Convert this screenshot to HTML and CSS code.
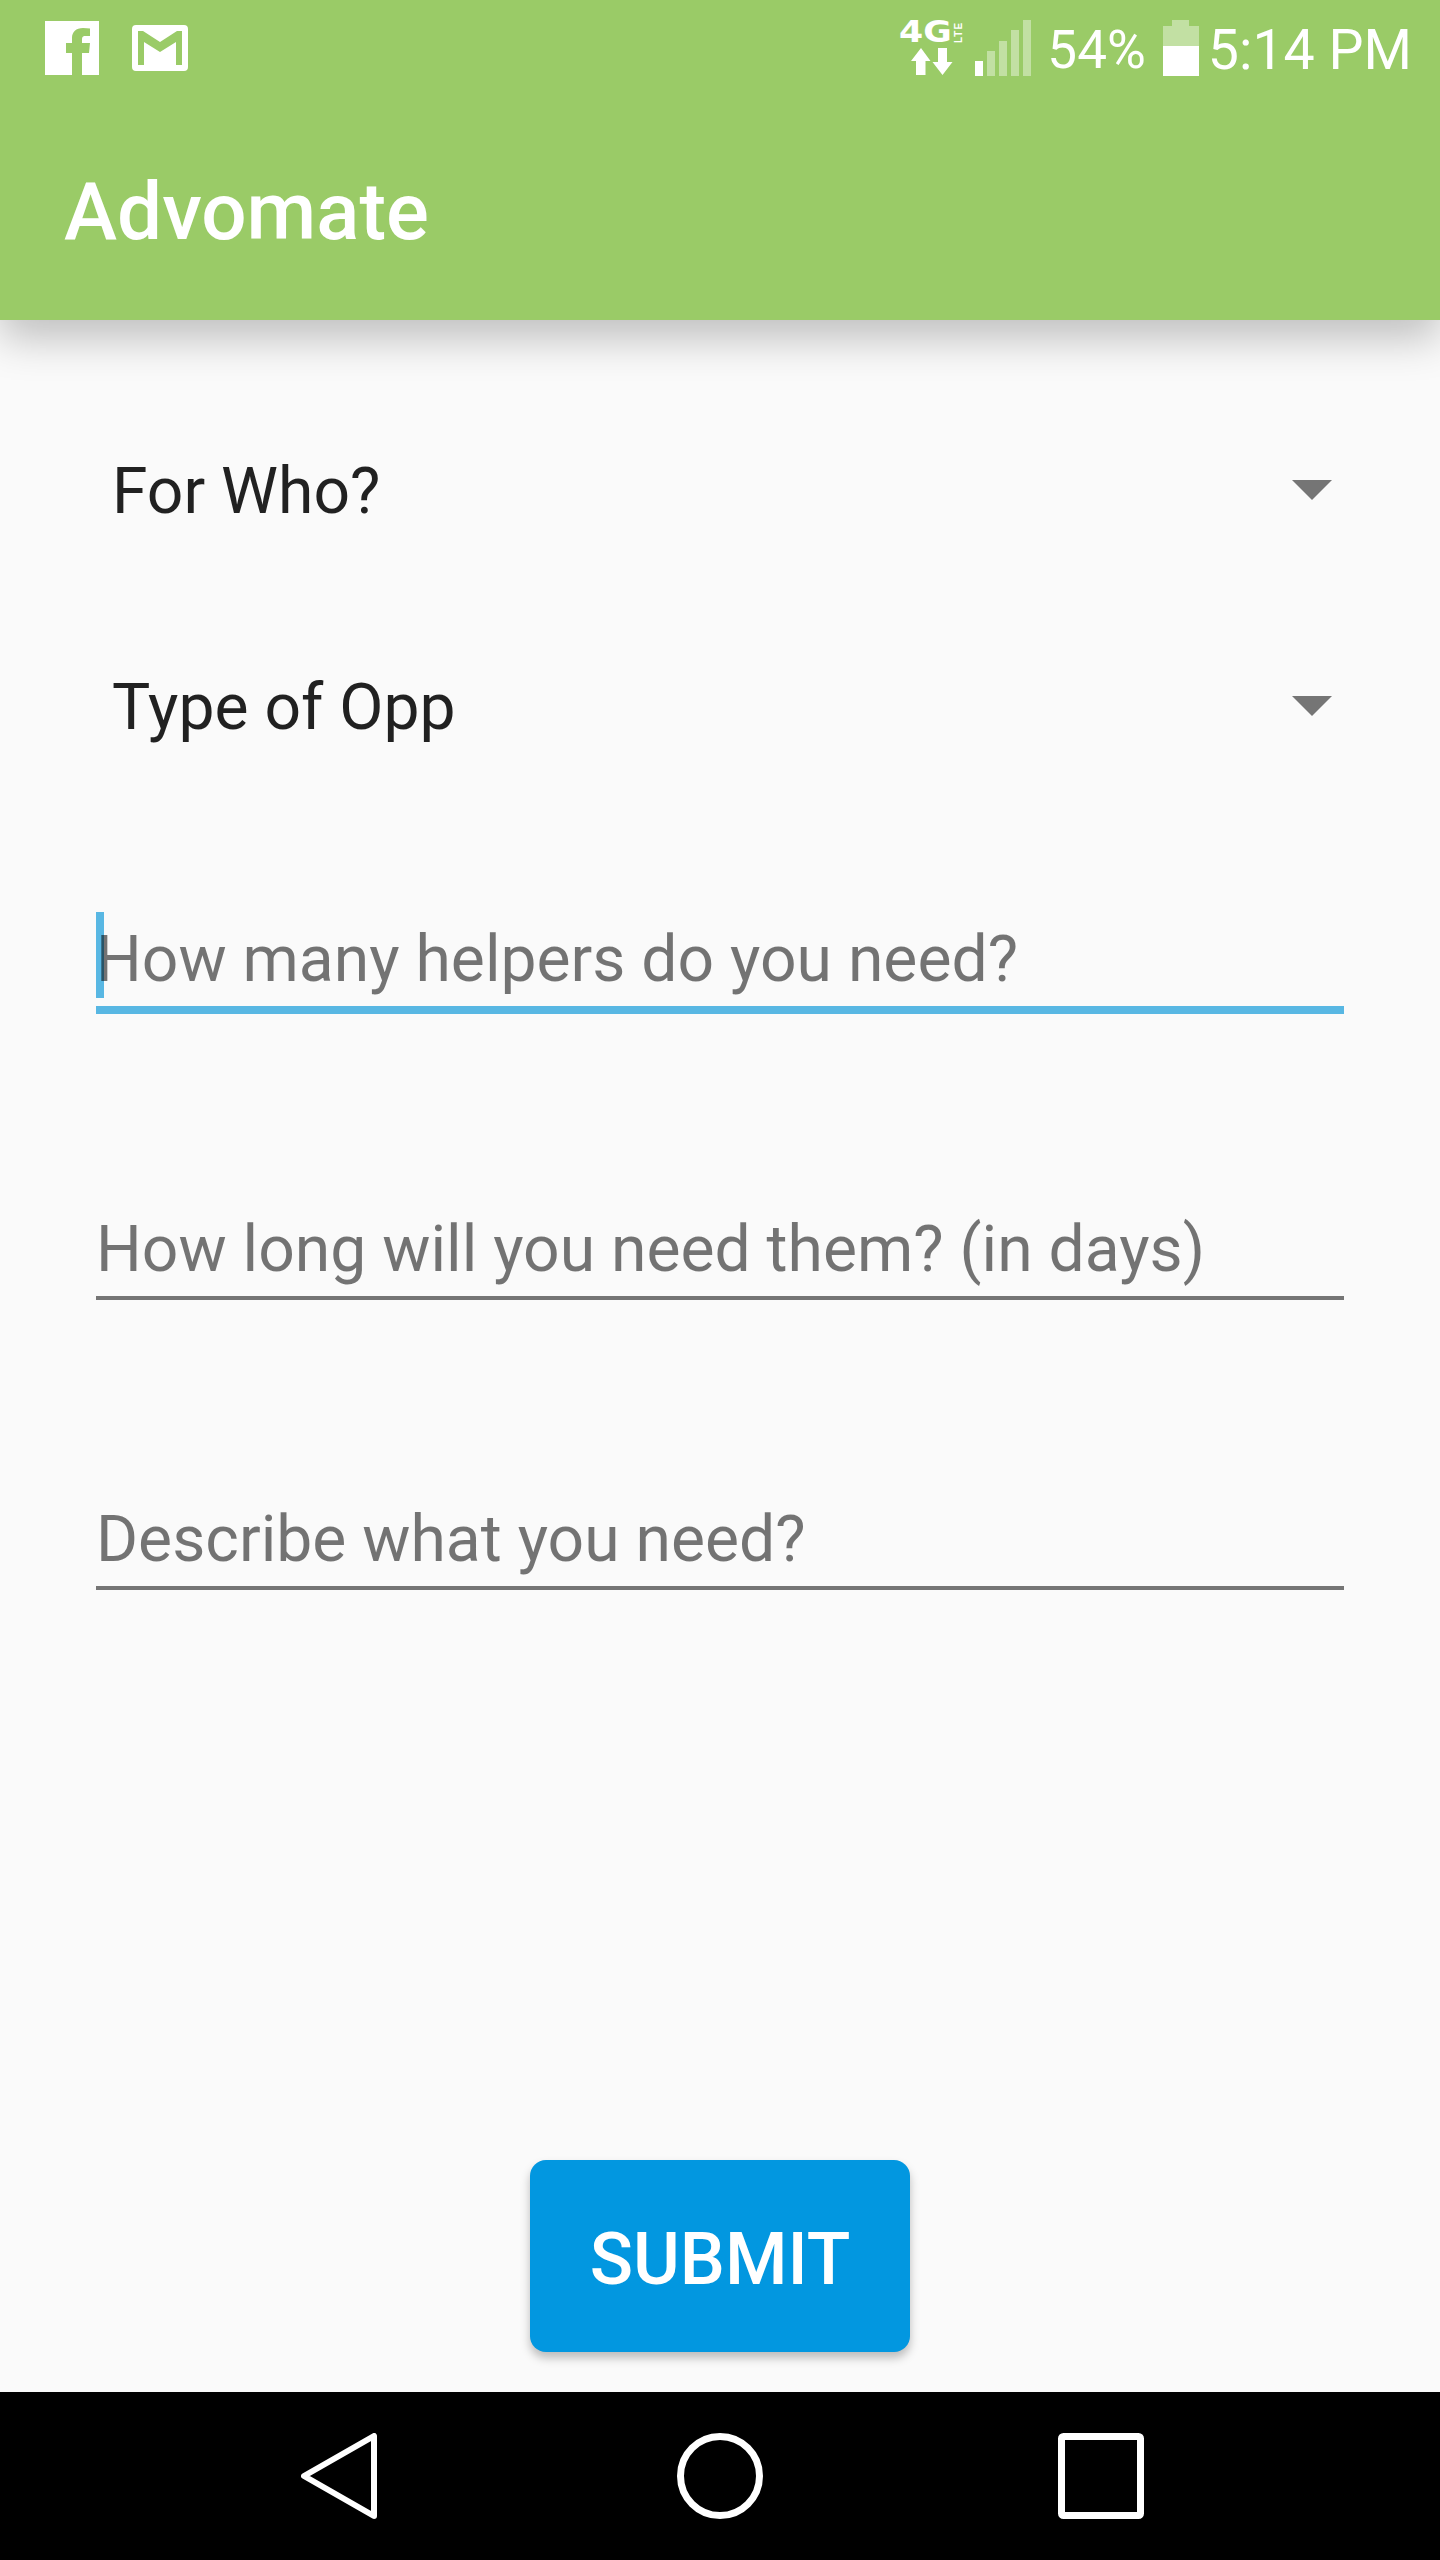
FILE: index.html
```html
<html>
<head>
  <title>Advomate</title>
  <link rel="stylesheet" href="styles.css">
</head>
<body>
  <header class="appbar">
    <div class="statusbar">
      <svg class="icon-fb" viewBox="0 0 54 54">
        <path fill="#fff" d="M0 0H54V54H37V32H44L45 22H37V18C37 15.500 38.500 15 41 15H45V7.500C43 7.200 40.500 7 38 7C31 7 27 11 27 17V22H21V32H27V54H0Z"/>
      </svg>
      <svg class="icon-mail" viewBox="0 0 56 46">
        <path fill="#fff" fill-rule="evenodd" d="M4 0H52Q56 0 56 4V42Q56 46 52 46H4Q0 46 0 42V4Q0 0 4 0ZM6 6V40H12V17L28 27L44 17V40H50V6H45L28 17L11 6Z"/>
      </svg>
      <div class="status-right">
        <div class="network">
          <div class="network-top"><span class="net-4g">4G</span><span class="net-lte">LTE</span></div>
          <svg class="net-arrows" viewBox="0 0 42 27">
            <path fill="#fff" d="M10 0L19.500 13H14.500V27H5V13H0ZM27 0H36V14H41.500L31.500 27L21.500 14H27Z"/>
          </svg>
        </div>
        <div class="signal">
          <i class="bar bar-1 on"></i><i class="bar bar-2"></i><i class="bar bar-3"></i><i class="bar bar-4"></i><i class="bar bar-5"></i>
        </div>
        <span class="battery-text">54%</span>
        <div class="battery"><i class="battery-cap"></i><i class="battery-empty"></i><i class="battery-full"></i></div>
        <span class="clock">5:14 PM</span>
      </div>
    </div>
    <div class="toolbar"><h1 class="title">Advomate</h1></div>
  </header>

  <main class="content">
    <div class="dropdown"><span class="dropdown-label">For Who?</span><i class="arrow"></i></div>
    <div class="dropdown"><span class="dropdown-label">Type of Opp</span><i class="arrow"></i></div>

    <div class="field field-first focused"><i class="caret"></i><span>How many helpers do you need?</span></div>
    <div class="field"><span>How long will you need them? (in days)</span></div>
    <div class="field"><span>Describe what you need?</span></div>

    <button class="submit"><span class="submit-label">SUBMIT</span></button>
  </main>

  <nav class="navbar">
    <svg class="nav-icon nav-back" viewBox="0 0 76 86">
      <path fill="none" stroke="#fff" stroke-width="6" stroke-linejoin="round" d="M73 3V83L3 43Z"/>
    </svg>
    <svg class="nav-icon nav-home" viewBox="0 0 86 86">
      <circle cx="43" cy="43" r="39.500" fill="none" stroke="#fff" stroke-width="7"/>
    </svg>
    <svg class="nav-icon nav-recent" viewBox="0 0 86 86">
      <rect x="3.500" y="3.500" width="79" height="79" rx="2" fill="none" stroke="#fff" stroke-width="7"/>
    </svg>
  </nav>
</body>
</html>
```

FILE: styles.css
```css
* {
  box-sizing: border-box;
}

html, body {
  margin: 0;
  height: 2560px;
}

body {
  font-family: Roboto, sans-serif;
  background-color: #fafafa;
  display: flex;
  flex-direction: column;
  overflow: hidden;
}

.appbar {
  height: 320px;
  background-color: #9acb67;
  box-shadow: 0 18px 40px rgba(0, 0, 0, 0.24);
  position: relative;
  z-index: 1;
}

.statusbar {
  height: 96px;
  display: flex;
  align-items: flex-start;
  padding-left: 45px;
  color: #fff;
}

.icon-fb {
  width: 54px;
  height: 54px;
  margin-top: 21px;
}

.icon-mail {
  width: 56px;
  height: 46px;
  margin: 25px 0 0 33px;
}

.status-right {
  margin-left: auto;
  padding-right: 28px;
  display: flex;
  align-items: flex-start;
}

.network {
  width: 65px;
  height: 56px;
  margin-top: 20px;
}

.network-top {
  display: flex;
  height: 24px;
}

.net-4g {
  font-family: "DejaVu Sans", sans-serif;
  font-weight: bold;
  font-size: 30px;
  line-height: 24px;
  width: 55px;
  transform: scaleX(1.16);
  transform-origin: left center;
}

.net-lte {
  font-family: "Liberation Sans", sans-serif;
  font-weight: bold;
  font-size: 10px;
  line-height: 10px;
  letter-spacing: 1px;
  writing-mode: vertical-rl;
  transform: rotate(180deg);
  text-align: center;
}

.net-arrows {
  display: block;
  width: 42px;
  height: 27px;
  margin: 4px 0 0 12px;
}

.signal {
  height: 56px;
  margin: 20px 0 0 11px;
  display: flex;
  align-items: flex-end;
  gap: 4px;
}

.bar {
  display: block;
  width: 8px;
  background-color: rgba(255, 255, 255, 0.4);
}

.bar.on {
  background-color: #fff;
}

.bar-1 { height: 15px; }
.bar-2 { height: 25px; }
.bar-3 { height: 35px; }
.bar-4 { height: 46px; }
.bar-5 { height: 56px; }

.battery-text {
  font-size: 53px;
  line-height: 96px;
  margin: 0 0 0 16px;
  height: 96px;
  position: relative;
  top: 2px;
}

.battery {
  width: 36px;
  height: 56px;
  margin: 20px 0 0 17px;
  display: flex;
  flex-direction: column;
  align-items: center;
}

.battery-cap {
  display: block;
  width: 17px;
  height: 6px;
  background-color: rgba(255, 255, 255, 0.4);
}

.battery-empty {
  display: block;
  width: 100%;
  height: 20px;
  background-color: rgba(255, 255, 255, 0.4);
}

.battery-full {
  display: block;
  width: 100%;
  height: 30px;
  background-color: #fff;
}

.clock {
  font-size: 55.500px;
  line-height: 96px;
  margin-left: 9px;
  position: relative;
  top: 3px;
}

.toolbar {
  height: 224px;
  display: flex;
  align-items: center;
  padding-left: 64px;
}

.title {
  margin: 0;
  font-size: 80px;
  font-weight: 500;
  color: #fff;
  position: relative;
  top: 4px;
}

.content {
  flex: 1;
  padding: 62px 96px 40px;
  display: flex;
  flex-direction: column;
}

.dropdown {
  height: 216px;
  margin-right: 12px;
  padding-left: 16px;
  display: flex;
  align-items: center;
  justify-content: space-between;
  font-size: 64.200px;
  color: rgba(0, 0, 0, 0.87);
}

.dropdown-label {
  padding-top: 2px;
}

.arrow {
  width: 0;
  height: 0;
  border-left: 20px solid transparent;
  border-right: 20px solid transparent;
  border-top: 20px solid #757575;
}

.field {
  height: 290px;
  border-bottom: 4px solid #757575;
  display: flex;
  align-items: flex-end;
  font-size: 64.200px;
  line-height: 70px;
  color: rgba(0, 0, 0, 0.54);
  padding-bottom: 12px;
  position: relative;
}

.field-first {
  margin-top: -90px;
}

/* the focused line is thicker, the next field still sits on the same pitch */
.focused {
  border-bottom: 8px solid #58b7e3;
  margin-bottom: -4px;
}

.caret {
  position: absolute;
  left: 0;
  bottom: 8px;
  width: 8px;
  height: 86px;
  background-color: #58b7e3;
  z-index: -1;
}

.submit {
  margin: auto auto 0;
  width: 380px;
  height: 192px;
  padding: 0;
  border: none;
  border-radius: 16px;
  background-color: #0297e0;
  color: #fff;
  font-family: Roboto, sans-serif;
  font-size: 71.500px;
  font-weight: 500;
  box-shadow: 0 6px 10px rgba(0, 0, 0, 0.25);
}

.submit-label {
  position: relative;
  top: 3px;
}

.navbar {
  height: 168px;
  background-color: #000;
  display: flex;
  align-items: flex-start;
  padding-top: 41px;
}

.nav-icon {
  display: block;
  height: 86px;
}

.nav-back {
  width: 76px;
  margin-left: 301px;
}

.nav-home {
  width: 86px;
  margin-left: 300px;
}

.nav-recent {
  width: 86px;
  margin-left: 295px;
}
```
